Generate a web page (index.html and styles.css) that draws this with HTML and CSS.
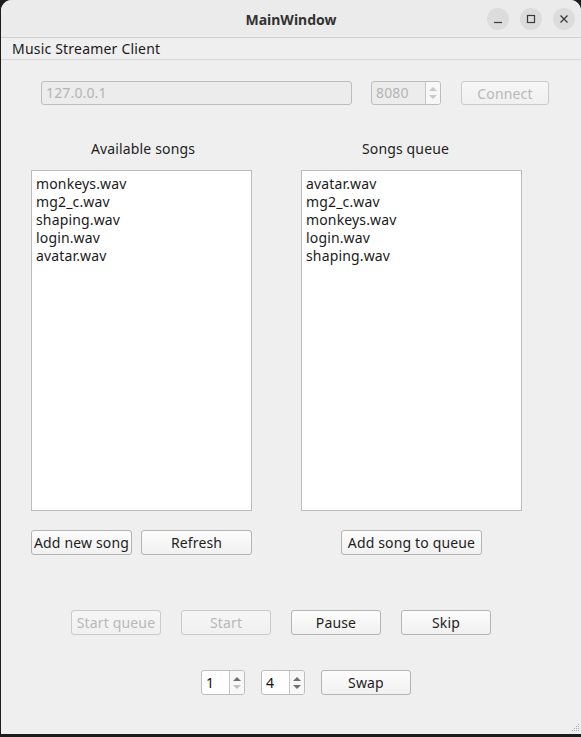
FILE: index.html
```html
<!DOCTYPE html>
<html>
<head>
<meta charset="utf-8">
<link rel="stylesheet" href="styles.css">
</head>
<body>
<div class="window">
  <div class="titlebar">
    <div class="title">MainWindow</div>
    <div class="wbtns">
      <span class="wbtn"><svg width="10" height="10" viewBox="0 0 10 10"><path d="M1 8.5H9" stroke="#3a3a3a" stroke-width="1.2"/></svg></span>
      <span class="wbtn"><svg width="10" height="10" viewBox="0 0 10 10"><rect x="1.5" y="1.5" width="7" height="7" fill="none" stroke="#3a3a3a" stroke-width="1.2"/></svg></span>
      <span class="wbtn"><svg width="10" height="10" viewBox="0 0 10 10"><path d="M1.5 1.5L8.5 8.5M8.5 1.5L1.5 8.5" stroke="#3a3a3a" stroke-width="1.3"/></svg></span>
    </div>
  </div>
  <div class="menubar"><span class="menu">Music Streamer Client</span></div>
  <div class="content">
    <div class="row conn">
      <div class="field ip disabled">127.0.0.1</div>
      <div class="spin port disabled"><span class="val">8080</span><span class="arrows"><i class="up"></i><i class="down"></i></span></div>
      <div class="btn connect disabled">Connect</div>
    </div>
    <div class="lists">
      <div class="col">
        <div class="label">Available songs</div>
        <div class="list">
          <div>monkeys.wav</div>
          <div>mg2_c.wav</div>
          <div>shaping.wav</div>
          <div>login.wav</div>
          <div>avatar.wav</div>
        </div>
        <div class="btnrow left">
          <div class="btn addnew">Add new song</div>
          <div class="btn refresh">Refresh</div>
        </div>
      </div>
      <div class="col">
        <div class="label q">Songs queue</div>
        <div class="list">
          <div>avatar.wav</div>
          <div>mg2_c.wav</div>
          <div>monkeys.wav</div>
          <div>login.wav</div>
          <div>shaping.wav</div>
        </div>
        <div class="btnrow center">
          <div class="btn addq">Add song to queue</div>
        </div>
      </div>
    </div>
    <div class="row play">
      <div class="btn w90 disabled">Start queue</div>
      <div class="btn w90 disabled">Start</div>
      <div class="btn w90">Pause</div>
      <div class="btn w90">Skip</div>
    </div>
    <div class="row swaprow">
      <div class="spin small"><span class="val">1</span><span class="arrows"><i class="up"></i><i class="down dim"></i></span></div>
      <div class="spin small"><span class="val">4</span><span class="arrows"><i class="up"></i><i class="down"></i></span></div>
      <div class="btn w90">Swap</div>
    </div>
    <div class="grip">
      <svg width="12" height="12" viewBox="0 0 12 12" fill="#a8a8a8">
        <rect x="10" y="2" width="1" height="1"/>
        <rect x="8" y="4" width="1" height="1"/><rect x="10" y="4" width="1" height="1"/>
        <rect x="6" y="6" width="1" height="1"/><rect x="8" y="6" width="1" height="1"/><rect x="10" y="6" width="1" height="1"/>
        <rect x="4" y="8" width="1" height="1"/><rect x="6" y="8" width="1" height="1"/><rect x="8" y="8" width="1" height="1"/><rect x="10" y="8" width="1" height="1"/>
      </svg>
    </div>
  </div>
</div>
</body>
</html>
```
FILE: styles.css
```css
* { box-sizing: border-box; }
html, body {
  margin: 0;
  padding: 0;
  background: #1c1c1c;
  width: 581px;
  height: 737px;
  overflow: hidden;
}
body {
  font-family: "Noto Sans", "Open Sans", sans-serif;
  font-size: 14px;
  color: #222;
  letter-spacing: 0.15px;
}
.window {
  margin-left: 1px;
  width: 580px;
  height: 734px;
  background: #efefef;
  border-radius: 11px 11px 0 0;
  overflow: hidden;
  display: flex;
  flex-direction: column;
}
.titlebar {
  height: 38px;
  background: #ebebeb;
  border-bottom: 1px solid #d2d2d2;
  position: relative;
  display: flex;
  align-items: center;
  justify-content: center;
  padding-top: 2px;
}
.title {
  font-weight: bold;
  font-size: 14px;
  color: #333;
  letter-spacing: 0;
}
.wbtns {
  position: absolute;
  right: 6px;
  top: 8px;
  display: flex;
  gap: 11px;
}
.wbtn {
  width: 22px;
  height: 22px;
  border-radius: 50%;
  background: #dcdcdc;
  display: flex;
  align-items: center;
  justify-content: center;
}
.menubar {
  height: 22px;
  border-bottom: 1px solid #d6d6d6;
  display: flex;
  align-items: center;
  padding-left: 11px;
  background: #efefef;
}
.menu { color: #1a1a1a; line-height: 20px; letter-spacing: 0.2px; }
.content {
  flex: 1;
  display: flex;
  flex-direction: column;
  position: relative;
}
.row { display: flex; }
.conn {
  margin-top: 21px;
  margin-left: 40px;
  height: 24px;
}
.field {
  height: 24px;
  border: 1px solid #bdbdbd;
  border-radius: 3px;
  background: #ececec;
  padding-left: 4px;
  line-height: 22px;
}
.ip { width: 311px; }
.disabled { color: #b4b4b4; }
.spin {
  display: flex;
  height: 24px;
  border: 1px solid #bdbdbd;
  border-radius: 3px;
  background: #fff;
  overflow: hidden;
}
.spin .val {
  flex: 1;
  padding-left: 4px;
  line-height: 22px;
}
.spin .arrows {
  width: 15px;
  border-left: 1px solid #c6c6c6;
  background: #f7f7f7;
  display: flex;
  flex-direction: column;
  align-items: center;
  justify-content: center;
  gap: 4px;
}
.spin i {
  display: block;
  width: 0;
  height: 0;
  border-left: 4px solid transparent;
  border-right: 4px solid transparent;
}
.spin i.up { border-bottom: 4px solid #707070; }
.spin i.down { border-top: 4px solid #707070; }
.spin i.dim { border-top-color: #c0c0c0; }
.port {
  width: 70px;
  margin-left: 19px;
  background: #ececec;
}
.port i.up { border-bottom-color: #c8c8c8; }
.port i.down { border-top-color: #c8c8c8; }
.btn {
  height: 25px;
  border: 1px solid #b4b4b4;
  border-radius: 3px;
  background: linear-gradient(#fcfcfc, #f1f1f1);
  display: flex;
  align-items: center;
  justify-content: center;
  color: #1e1e1e;
  white-space: nowrap;
}
.btn.disabled {
  color: #b8b8b8;
  border-color: #cacaca;
  background: linear-gradient(#f6f6f6, #f0f0f0);
}
.connect {
  width: 88px;
  height: 24px;
  margin-left: 20px;
}
.lists {
  display: flex;
  margin-left: 30px;
  margin-top: 35px;
  gap: 49px;
}
.col {
  width: 221px;
  display: flex;
  flex-direction: column;
}
.label {
  height: 18px;
  line-height: 18px;
  text-align: center;
  color: #1e1e1e;
  padding-left: 3px;
}
.label.q { padding-left: 0; padding-right: 12px; }
.list {
  margin-top: 12px;
  height: 341px;
  background: #fff;
  border: 1px solid #bcbcbc;
  padding: 4px 4px;
  line-height: 18px;
  color: #1a1a1a;
}
.btnrow {
  margin-top: 19px;
  display: flex;
}
.btnrow.left { gap: 9px; }
.btnrow.center { justify-content: center; }
.addnew { width: 101px; }
.refresh { width: 111px; }
.addq { width: 141px; }
.play {
  margin-top: 55px;
  margin-left: 70px;
  gap: 20px;
}
.w90 { width: 90px; }
.swaprow {
  margin-top: 35px;
  margin-left: 200px;
  gap: 16px;
}
.spin.small { width: 44px; height: 25px; }
.spin.small .val { line-height: 23px; color: #111; }
.grip {
  margin-top: auto;
  align-self: flex-end;
  height: 12px;
  margin-right: 1px;
}
.grip svg { display: block; }
```
